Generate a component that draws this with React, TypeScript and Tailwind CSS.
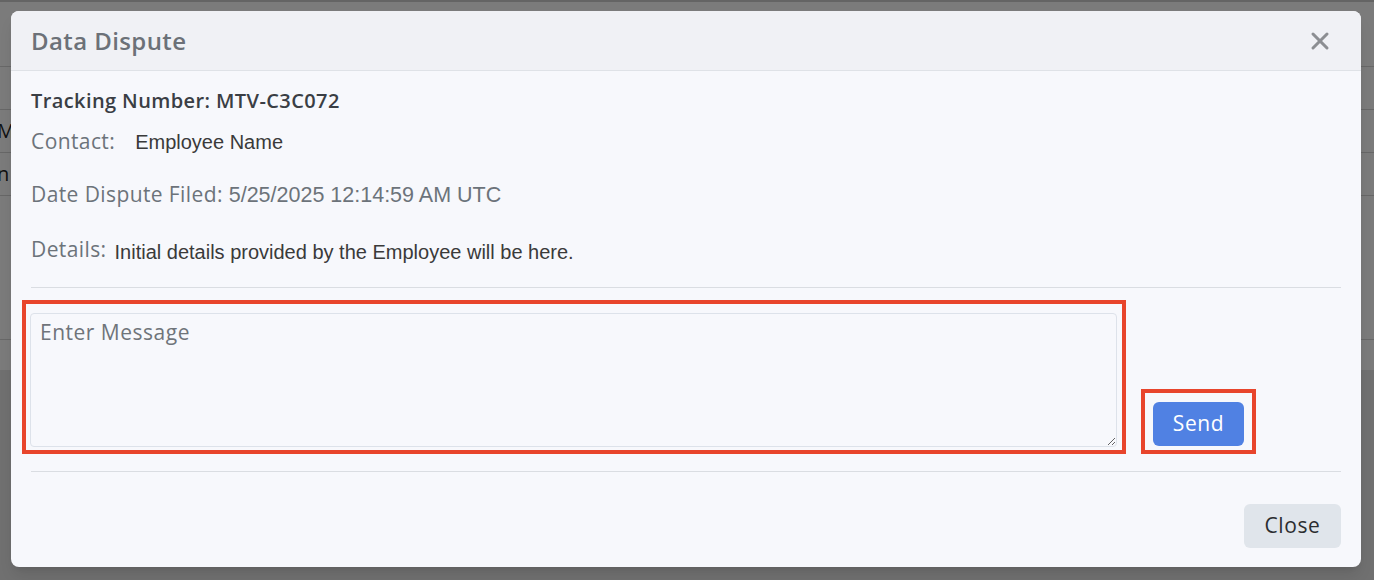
import React, { useState } from 'react';
import { X } from 'lucide-react';

const poppins = { fontFamily: '"Open Sans", "Noto Sans", sans-serif' };
const arial = { fontFamily: '"Liberation Sans", Arial, sans-serif' };

function BackgroundPage() {
  return (
    <div className="h-[580px] w-full bg-[#e0e0e0]">
      <div className="h-[370px] border-t-2 border-[#c8c8c8] bg-[#f7f7f7]">
        <div className="h-[65px] border-b border-[#d0d0d0]" />
        {['', 'Mi', 'n'].map((t, i) => (
          <div key={i} className="flex h-[43px] items-center border-b border-[#cfcfcf] text-[20px] text-[#222]" style={poppins}>
            <span className="-ml-[3px]">{t}</span>
          </div>
        ))}
        <div className="h-[144px] border-b border-[#d0d0d0]" />
      </div>
    </div>
  );
}

export default function App() {
  const [message, setMessage] = useState('');

  return (
    <div className="relative h-[580px] w-[1374px] overflow-hidden">
      <BackgroundPage />

      {/* Overlay */}
      <div className="absolute inset-0 bg-black/50">
        <div className="absolute left-[11px] top-[11px] w-[1350px] overflow-hidden rounded-[8px] bg-[#f7f8fc] shadow-lg">
          {/* Header */}
          <div className="flex h-[60px] items-center justify-between border-b border-[#dfe2e7] bg-[#f0f1f5] pl-[20px] pr-[27px]">
            <h2 className="text-[24px] font-semibold tracking-[0.4px] text-[#6c7178]" style={poppins}>
              Data Dispute
            </h2>
            <button className="text-[#8c8e92]">
              <X className="h-[28px] w-[28px]" strokeWidth={2.6} />
            </button>
          </div>

          {/* Body */}
          <div className="px-[20px]">
            <div className="pt-[16px] text-[20px] font-semibold leading-[28px] tracking-[0.4px] text-[#3a3e44]" style={poppins}>
              Tracking Number: MTV-C3C072
            </div>

            <div className="mt-[9px] flex items-center gap-[20px] leading-[30px]">
              <span className="text-[21px] tracking-[0.4px] text-[#6c737a]" style={poppins}>Contact:</span>
              <span className="mt-[3px] text-[20px] text-[#3a3a3a]" style={arial}>
                Employee Name
              </span>
            </div>

            <div className="mt-[22px] leading-[30px] text-[#6c737a]">
              <span className="text-[21px] tracking-[0.4px]" style={poppins}>Date Dispute Filed: </span>
              <span className="text-[21.5px]" style={arial}>5/25/2025 12:14:59 AM UTC</span>
            </div>

            <div className="mt-[19px] flex items-center gap-[8px] leading-[30px]">
              <span className="text-[21px] tracking-[0.4px] text-[#6c737a]" style={poppins}>Details:</span>
              <span className="mt-[7px] text-[20px] text-[#3a3a3a]" style={arial}>
                Initial details provided by the Employee will be here.
              </span>
            </div>

            <hr className="mt-[20px] border-[#dadde2]" />

            {/* Message row */}
            <div className="-ml-[9px] mt-[12px] flex items-end gap-[15px]">
              <div className="border-4 border-[#e8452c] pb-[3px] pl-[4px] pr-[5px] pt-[9px]">
                <textarea
                  value={message}
                  onChange={(e) => setMessage(e.target.value)}
                  placeholder="Enter Message"
                  className="block h-[134px] w-[1087px] rounded-[4px] border border-[#dde2ea] bg-[#f7f8fc] px-[9px] py-[3px] text-[21px] tracking-[0.5px] text-[#333] placeholder:text-[#6f747a] focus:outline-none"
                  style={poppins}
                />
              </div>
              <div className="border-4 border-[#e8452c] pb-[4px] pl-[8px] pr-[8px] pt-[9px]">
                <button className="h-[44px] w-[91px] rounded-[6px] bg-[#5081e3] text-[21px] tracking-[0.6px] text-white" style={poppins}>
                  Send
                </button>
              </div>
            </div>

            <hr className="mt-[17px] border-[#dadde2]" />

            {/* Footer */}
            <div className="flex justify-end pb-[19px] pt-[32px]">
              <button className="h-[44px] w-[97px] rounded-[6px] bg-[#e0e5eb] text-[21px] tracking-[0.6px] text-[#2b2d30]" style={poppins}>
                Close
              </button>
            </div>
          </div>
        </div>
      </div>
    </div>
  );
}
